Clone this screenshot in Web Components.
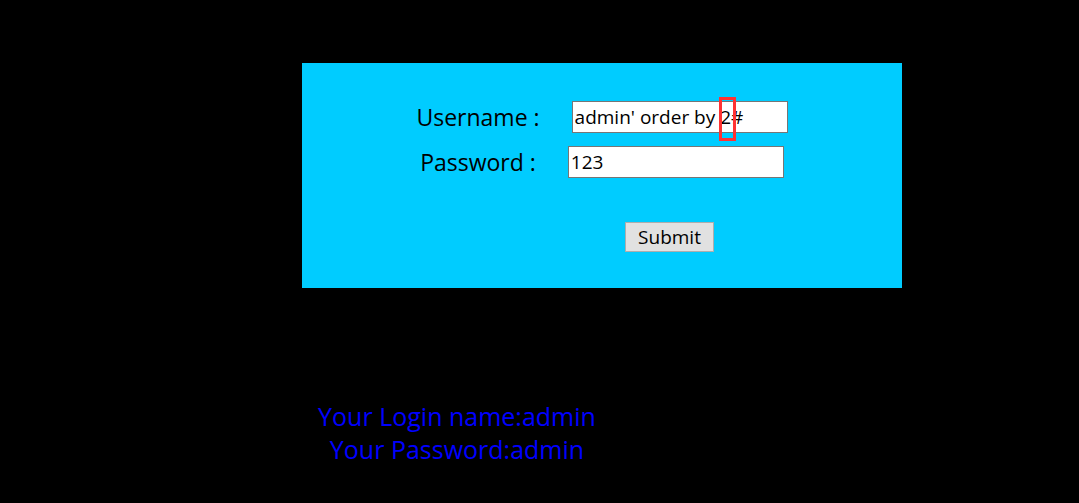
<!DOCTYPE html>
<html lang="en">
<head>
<meta charset="utf-8">
<title>Login</title>
<style>
body { margin: 0; background: #000; font-family: "Open Sans", "Noto Sans", sans-serif; }
</style>
</head>
<body>
<login-page></login-page>
<script>
class BaseElement extends HTMLElement {
  constructor() {
    super();
    this.attachShadow({ mode: 'open' }).innerHTML = this.render();
  }
}

customElements.define('login-field', class extends BaseElement {
  render() {
    return `<style>
      :host { display: flex; justify-content: center; align-items: center; gap: 32px; }
      label { color: #000; font-size: 23px; line-height: 32px; white-space: pre; }
      .box { position: relative; width: 216px; }
      input { display: block; box-sizing: border-box; width: 100%; height: 32px; padding: 1px 2px;
        border: 1px solid #767676; border-radius: 0; background: #fff; color: #000;
        font: 19px "Open Sans", "Noto Sans", sans-serif; outline: none; }
    </style>
    <label for="field"></label>
    <div class="box"><input id="field"><slot></slot></div>`;
  }
  connectedCallback() {
    this.shadowRoot.querySelector('label').textContent = this.getAttribute('label');
    this.shadowRoot.querySelector('input').value = this.getAttribute('value');
  }
});

customElements.define('highlight-frame', class extends BaseElement {
  render() {
    return `<style>
      :host { position: absolute; left: 147px; top: -4px; box-sizing: border-box; width: 17px; height: 44px;
        border: 3px solid #f33; pointer-events: none; }
    </style>`;
  }
});

customElements.define('login-form', class extends BaseElement {
  render() {
    return `<style>
      :host { display: block; box-sizing: border-box; width: 600px; min-height: 225px; padding: 38px 0 36px; background: #0cf; }
      form { display: flex; flex-direction: column; gap: 13px; }
      button { align-self: center; box-sizing: border-box; width: 89px; height: 30px; margin: 31px 0 0 135px; padding: 0;
        border: 1px solid #adadad; border-radius: 0; background: #e1e1e1; color: #000;
        font: 19px/28px "Open Sans", "Noto Sans", sans-serif; }
    </style>
    <form>
      <login-field label="Username :" value="admin' order by 2#"><highlight-frame></highlight-frame></login-field>
      <login-field label="Password :" value="123"></login-field>
      <button type="button">Submit</button>
    </form>`;
  }
});

customElements.define('login-result', class extends BaseElement {
  render() {
    return `<style>
      :host { display: block; width: 310px; margin-top: 112px; color: #00f; font-size: 25px; line-height: 33px; text-align: center; white-space: nowrap; }
      p { margin: 0; }
    </style>
    <p>Your Login name:admin</p>
    <p>Your Password:admin</p>`;
  }
});

customElements.define('login-page', class extends BaseElement {
  render() {
    return `<style>
      :host { display: flex; justify-content: center; padding: 63px 0 32px 125px; }
    </style>
    <main><login-form></login-form><login-result></login-result></main>`;
  }
});
</script>
</body>
</html>
